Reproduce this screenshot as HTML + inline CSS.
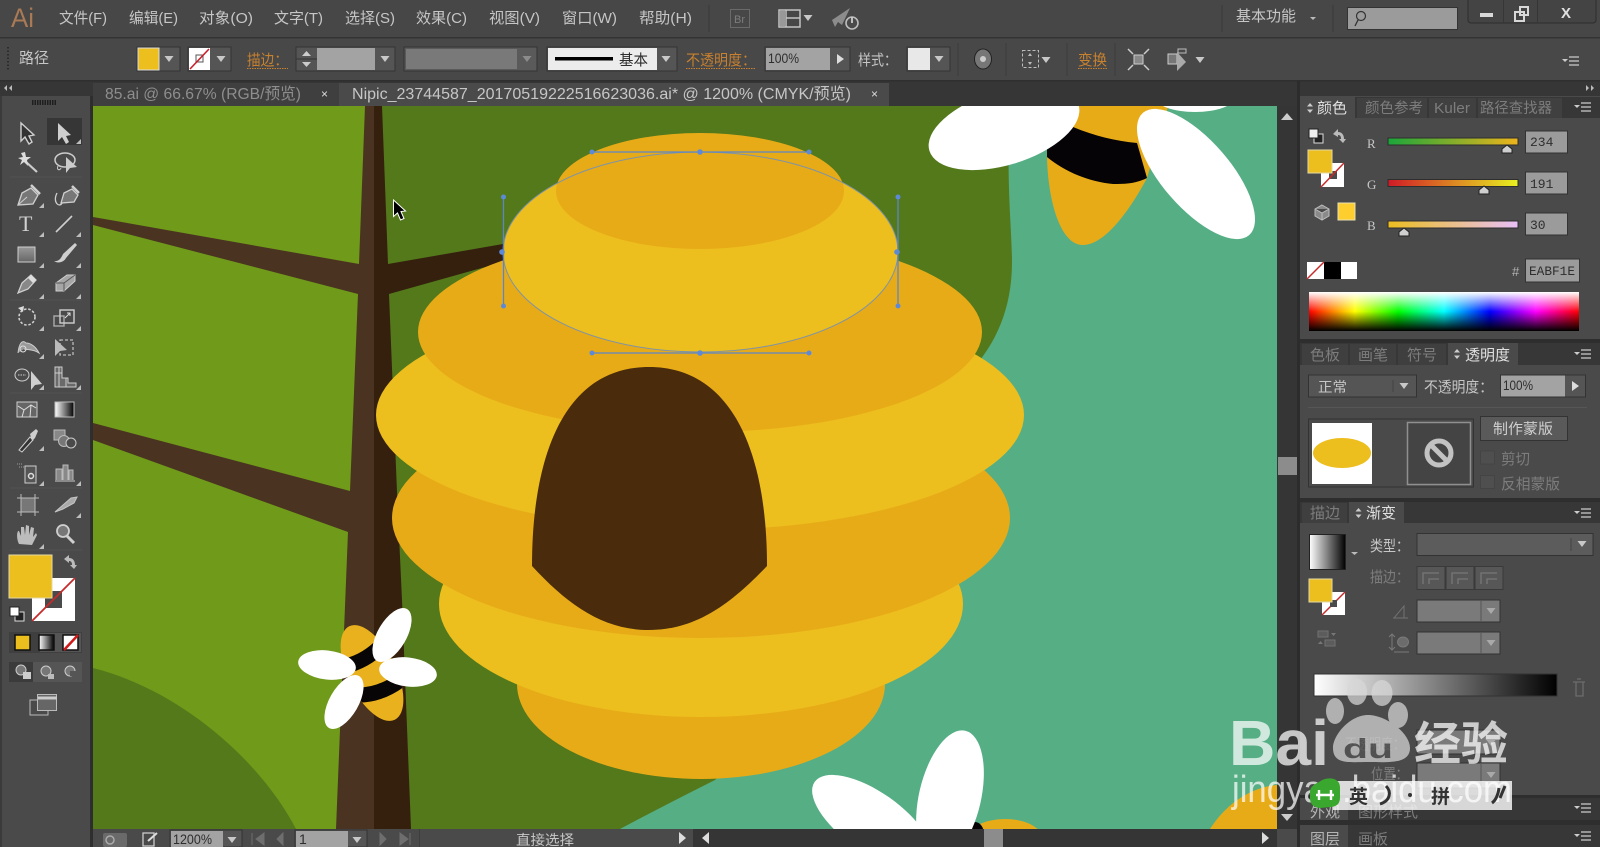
<!DOCTYPE html>
<html><head><meta charset="utf-8"><title>Illustrator</title>
<style>
html,body{margin:0;padding:0;background:#4a4a4a;overflow:hidden}
svg{display:block;font-family:"Liberation Sans","Noto Sans CJK SC",sans-serif}
text{fill:#c6c6c6;font-size:15px}
.d{fill:#7d7d7d}.o{fill:#c8812f}.m{fill:#b4b4b4}
.i{fill:#2e2e2e;font-size:14px}
.t{fill:none;stroke:#c6c6c6;stroke-width:1.5}
.f{fill:#c6c6c6}
</style></head><body>
<svg width="1600" height="847" viewBox="0 0 1600 847" xmlns="http://www.w3.org/2000/svg">
<defs>
<linearGradient id="gr" x1="0" x2="1"><stop offset="0" stop-color="#1aa63a"/><stop offset="1" stop-color="#eeb41c"/></linearGradient>
<linearGradient id="gg" x1="0" x2="1"><stop offset="0" stop-color="#d01a26"/><stop offset="1" stop-color="#e8f020"/></linearGradient>
<linearGradient id="gb" x1="0" x2="1"><stop offset="0" stop-color="#ecbe1e"/><stop offset="1" stop-color="#e8c0f8"/></linearGradient>
<linearGradient id="wb" x1="0" x2="1"><stop offset="0" stop-color="#fff"/><stop offset="1" stop-color="#000"/></linearGradient>
<linearGradient id="hue" x1="0" x2="1">
<stop offset="0" stop-color="#f00"/><stop offset=".17" stop-color="#ff0"/><stop offset=".33" stop-color="#0f0"/><stop offset=".5" stop-color="#0ff"/><stop offset=".67" stop-color="#00f"/><stop offset=".84" stop-color="#f0f"/><stop offset="1" stop-color="#f00"/></linearGradient>
<linearGradient id="shade" x1="0" x2="0" y1="0" y2="1"><stop offset="0" stop-color="#fff"/><stop offset=".5" stop-color="#fff" stop-opacity="0"/><stop offset=".5" stop-color="#000" stop-opacity="0"/><stop offset="1" stop-color="#000"/></linearGradient>
<linearGradient id="tg" x1="0" x2="0" y1="0" y2="1"><stop offset="0" stop-color="#999"/><stop offset="1" stop-color="#666"/></linearGradient>
<clipPath id="cv"><rect x="93" y="106" width="1184" height="723"/></clipPath>
<clipPath id="sb"><ellipse cx="372" cy="673" rx="52" ry="24" transform="rotate(64 372 673)"/></clipPath>
<path id="ca" d="M0 5L5 5L5 0Z" fill="#bdbdbd"/>
<path id="dn" d="M-4.500 -3L4.500 -3L0 3Z" fill="#c8c8c8"/>
<g id="mn"><path d="M-13 -2h6l-3 3z" fill="#ccc"/><path d="M-6 -4h10M-6 0h10M-6 4h10" stroke="#ccc" stroke-width="1.300" fill="none"/></g>
<g id="sw"><path d="M-3 -1.500L0 -5L3 -1.500ZM-3 1.500L0 5L3 1.500Z" fill="#ccc"/></g>
</defs>

<rect width="1600" height="847" fill="#4a4a4a"/>
<!-- top menu -->
<rect width="1600" height="37" fill="#474747"/><rect y="37" width="1600" height="1.500" fill="#333"/>
<text x="11" y="27" style="font-size:27px;fill:#a97a55" textLength="23" lengthAdjust="spacingAndGlyphs">Ai</text>
<text x="59" y="23" textLength="48" lengthAdjust="spacingAndGlyphs">文件(F)</text>
<text x="129" y="23" textLength="49" lengthAdjust="spacingAndGlyphs">编辑(E)</text>
<text x="199" y="23" textLength="54" lengthAdjust="spacingAndGlyphs">对象(O)</text>
<text x="274" y="23" textLength="49" lengthAdjust="spacingAndGlyphs">文字(T)</text>
<text x="345" y="23" textLength="50" lengthAdjust="spacingAndGlyphs">选择(S)</text>
<text x="416" y="23" textLength="51" lengthAdjust="spacingAndGlyphs">效果(C)</text>
<text x="489" y="23" textLength="51" lengthAdjust="spacingAndGlyphs">视图(V)</text>
<text x="562" y="23" textLength="55" lengthAdjust="spacingAndGlyphs">窗口(W)</text>
<text x="639" y="23" textLength="53" lengthAdjust="spacingAndGlyphs">帮助(H)</text>
<path d="M709 5V32" stroke="#3a3a3a"/>
<rect x="730.500" y="9.500" width="19" height="18" fill="none" stroke="#6a6a6a"/><text x="734" y="23" class="d" style="font-size:11px">Br</text>
<g fill="none" stroke="#c4c4c4" stroke-width="1.500"><rect x="779" y="10" width="21" height="17"/><path d="M786 10V27M786 18H800"/></g><rect x="780" y="11" width="6" height="15" fill="#999"/><use href="#dn" x="808" y="18"/>
<g fill="#8c8c8c"><path d="M832 20L850 8L842 25L838 22L835 27Z"/></g><circle cx="852" cy="23" r="6" fill="#4a4a4a" stroke="#bdbdbd" stroke-width="1.600"/><path d="M852 17V23" stroke="#ccc" stroke-width="1.800"/>
<path d="M1222 5V32M1333 5V32" stroke="#3a3a3a"/>
<text x="1236" y="21" textLength="60" lengthAdjust="spacingAndGlyphs">基本功能</text><path d="M1310 17h6l-3 3z" fill="#bbb"/>
<rect x="1347.500" y="7.500" width="110" height="22" fill="#9b9b9b" stroke="#333"/>
<circle cx="1361" cy="16" r="4.500" fill="none" stroke="#333" stroke-width="1.200"/><path d="M1358 20L1355 26" stroke="#333" stroke-width="1.300"/>
<rect x="1468" y="-4" width="128" height="27" rx="3" fill="#444" stroke="#2e2e2e"/><path d="M1503.500 0V23M1537.500 0V23" stroke="#363636"/>
<rect x="1480" y="13" width="13" height="4" fill="#d8d8d8"/>
<g fill="none" stroke="#d8d8d8" stroke-width="2"><rect x="1515" y="12" width="9" height="9"/><rect x="1520" y="7" width="8" height="8"/></g>
<text x="1561" y="18" style="font-size:15px;font-weight:bold;fill:#e0e0e0">X</text>

<!-- control bar -->
<rect y="38.500" width="1600" height="42" fill="#484848"/><rect y="80" width="1600" height="1.500" fill="#2f2f2f"/>
<path d="M8 47V71" stroke="#222" stroke-width="1.500" stroke-dasharray="1.500 2"/>
<text x="19" y="63" textLength="30" lengthAdjust="spacingAndGlyphs">路径</text>
<rect x="137" y="47" width="43" height="24" fill="#555" stroke="#333"/><rect x="138" y="48" width="21" height="22" fill="#ecbe1e" stroke="#ddd"/><use href="#dn" x="169" y="59"/>
<rect x="188" y="47" width="43" height="24" fill="#555" stroke="#333"/><rect x="189" y="48" width="21" height="22" fill="#fff"/><rect x="196" y="55" width="7" height="7" fill="none" stroke="#555"/><path d="M190 69L209 49" stroke="#c8202a" stroke-width="1.600"/><use href="#dn" x="221" y="59"/>
<text x="247" y="65" class="o" textLength="41" lengthAdjust="spacingAndGlyphs">描边：</text><path d="M247 68.500H288" stroke="#c8812f" stroke-dasharray="1.500 1"/>
<rect x="296" y="47" width="99" height="24" fill="#555" stroke="#333"/><rect x="317" y="48" width="58" height="22" fill="#a3a3a3"/><path d="M296 59H317" stroke="#333"/><path d="M302 56l4.500-5 4.500 5zM302 62l4.500 5 4.500-5z" fill="#ccc"/><use href="#dn" x="385" y="59"/>
<rect x="404" y="47" width="133" height="24" fill="#5a5a5a" stroke="#333"/><rect x="406" y="49" width="111" height="20" fill="#797979"/><use href="#dn" x="527" y="59" opacity=".45"/>
<rect x="547" y="47" width="130" height="24" fill="#555" stroke="#333"/><rect x="548" y="48" width="109" height="22" fill="#ececec"/><rect x="555" y="57" width="58" height="3.500" fill="#000"/><text x="619" y="65" class="i" style="font-size:15px" textLength="29" lengthAdjust="spacingAndGlyphs">基本</text><use href="#dn" x="666" y="59"/>
<text x="686" y="65" class="o" textLength="70" lengthAdjust="spacingAndGlyphs">不透明度：</text><path d="M686 68.500H756" stroke="#c8812f" stroke-dasharray="1.500 1"/>
<rect x="765" y="47" width="85" height="24" fill="#555" stroke="#333"/><rect x="766" y="48" width="64" height="22" fill="#a3a3a3"/><text x="768" y="63" class="i" textLength="31" lengthAdjust="spacingAndGlyphs">100%</text><path d="M837 54l7 5-7 5z" fill="#ddd"/>
<text x="858" y="65" textLength="39" lengthAdjust="spacingAndGlyphs">样式：</text>
<rect x="907" y="47" width="43" height="24" fill="#555" stroke="#333"/><rect x="908" y="48" width="22" height="22" fill="#e8e8e8"/><use href="#dn" x="939" y="59"/>
<path d="M958 43V76M1006 43V76M1067 43V76M1115 43V76" stroke="#3d3d3d"/>
<ellipse cx="983" cy="59" rx="8.500" ry="10" fill="#777" stroke="#222"/><circle cx="983" cy="59" r="3" fill="#ccc"/>
<rect x="1022.500" y="50.500" width="16" height="17" fill="none" stroke="#bdbdbd" stroke-dasharray="3 2"/><path d="M1030 53l2 3h-4zM1030 65l2-3h-4z" fill="#bbb"/><use href="#dn" x="1046" y="60"/>
<text x="1078" y="65" class="o" textLength="29" lengthAdjust="spacingAndGlyphs">变换</text><path d="M1078 68.500H1107" stroke="#c8812f" stroke-dasharray="1.500 1"/>
<rect x="1134" y="55" width="9" height="9" fill="#888" stroke="#ccc"/><path d="M1128 49l5 5M1149 49l-5 5M1128 70l5-5M1149 70l-5-5" stroke="#ccc" stroke-width="1.500"/>
<rect x="1168" y="54" width="9" height="10" fill="#777" stroke="#ccc"/><rect x="1178" y="49" width="8" height="4" fill="none" stroke="#bbb"/><path d="M1177 52V71L1186 62Z" fill="#aaa"/><use href="#dn" x="1200" y="60"/>
<use href="#mn" x="1575" y="61"/>

<!-- tab row -->
<rect y="81.500" width="1600" height="25" fill="#363636"/>
<path d="M6 85l-3 3 3 3zM11 85l-3 3 3 3z" fill="#bbb"/>
<rect x="93" y="83" width="246" height="23" fill="#3f3f3f"/>
<rect x="339" y="83" width="550" height="23" fill="#4a4a4a"/>
<text x="105" y="99" style="fill:#8e8e8e;font-size:16px" textLength="196" lengthAdjust="spacingAndGlyphs">85.ai @ 66.67% (RGB/预览)</text>
<text x="321" y="98" style="font-size:12px;fill:#ddd">×</text>
<text x="352" y="99" style="font-size:16px" textLength="499" lengthAdjust="spacingAndGlyphs">Nipic_23744587_20170519222516623036.ai* @ 1200% (CMYK/预览)</text>
<text x="871" y="98" style="font-size:12px;fill:#ddd">×</text>

<!-- canvas -->
<rect x="90" y="96" width="3" height="751" fill="#2e2e2e"/>
<g clip-path="url(#cv)">
<rect x="93" y="106" width="1184" height="723" fill="#56ae85"/>
<path d="M93 106H1011C1005 170 1012 230 1012 262C1012 310 995 345 970 372C900 560 800 700 715 780Q665 805 620 829H93Z" fill="#53791b"/>
<path d="M93 106H374V829H93Z" fill="#6f9a1a"/>
<path d="M93 668C180 690 260 760 296 829H93Z" fill="#53791b"/>
<!-- tree -->
<path d="M93 217L359 264L365 106H374V829H336L348 532L93 440V423L350 491L358 294L93 225Z" fill="#4a3320"/>
<path d="M374 106H382L388 264L503 244V262L389 294L397 492L402 600L411 829H374Z" fill="#35200e"/>
<!-- hive -->
<ellipse cx="701" cy="684" rx="184" ry="95" fill="#e8ab18"/>
<ellipse cx="701" cy="604" rx="262" ry="113" fill="#ecbe1e"/>
<ellipse cx="701" cy="518" rx="309" ry="120" fill="#e8ab18"/>
<ellipse cx="700" cy="415" rx="324" ry="115" fill="#ecbe1e"/>
<ellipse cx="700" cy="332" rx="282" ry="100" fill="#e8ab18"/>
<ellipse cx="700.500" cy="252" rx="197.500" ry="100" fill="#ecbe1e"/>
<ellipse cx="700" cy="191" rx="144" ry="58" fill="#e8ab18"/>
<path d="M532 566C532 458 563 367 649 367C735 367 767 458 767 566C730 605 695 630 649 630C603 630 568 605 532 566Z" fill="#4a2c0c"/>
<!-- selection -->
<ellipse cx="700.500" cy="252" rx="197.500" ry="100" fill="none" stroke="#7d93a8" stroke-width="1"/>
<g stroke="#5c86c8" stroke-width="1.300" fill="none"><path d="M503.500 197V306M898 197V306M592 152H809M592 353H809"/></g>
<g fill="#5c8ad8"><circle cx="503.500" cy="197" r="2.500"/><circle cx="503.500" cy="306" r="2.500"/><circle cx="502" cy="252" r="2.800"/><circle cx="898" cy="197" r="2.500"/><circle cx="898" cy="306" r="2.500"/><circle cx="897" cy="252" r="2.800"/><circle cx="592" cy="152" r="2.500"/><circle cx="809" cy="152" r="2.500"/><circle cx="700" cy="152" r="2.800"/><circle cx="592" cy="353" r="2.500"/><circle cx="809" cy="353" r="2.500"/><circle cx="700" cy="353" r="2.800"/></g>
<!-- cursor -->
<path d="M393.500 200V216.500L397.500 213L400.500 220L404 218.500L401 211.500L405.500 211Z" fill="#000" stroke="#fff" stroke-width="1"/>
<!-- top bee -->
<path d="M1047 157C1048 200 1060 245 1083 245C1105 245 1130 210 1147 178L1170 100H1078L1073 127Z" fill="#e8ab18"/>
<path d="M1073 127C1095 136 1115 141 1137 143L1147 178C1135 184 1125 184 1113 184C1090 182 1065 172 1047 157V148Z" fill="#050305"/>
<ellipse cx="1004" cy="128" rx="78" ry="37" transform="rotate(-17 1004 128)" fill="#fff"/>
<ellipse cx="1196" cy="174" rx="81" ry="34" transform="rotate(49 1196 174)" fill="#fff"/>
<ellipse cx="1195" cy="97" rx="40" ry="15" fill="#fff"/>
<!-- small bee -->
<ellipse cx="372" cy="673" rx="52" ry="24" transform="rotate(64 372 673)" fill="#e9b11e"/>
<g clip-path="url(#sb)"><path d="M340 667Q362 664 380 647" stroke="#080506" stroke-width="15" fill="none"/><path d="M356 695Q380 696 402 679" stroke="#080506" stroke-width="15" fill="none"/></g>
<g fill="#fff">
<ellipse cx="327" cy="665" rx="29" ry="14.500" transform="rotate(7 327 665)"/>
<ellipse cx="408" cy="672" rx="29" ry="14.500" transform="rotate(7 408 672)"/>
<ellipse cx="392" cy="635" rx="30" ry="14.500" transform="rotate(-60 392 635)"/>
<ellipse cx="344" cy="702" rx="30" ry="14.500" transform="rotate(-60 344 702)"/>
</g>
<!-- bottom flower -->
<ellipse cx="1005" cy="838" rx="37" ry="19" fill="#e8ab18"/>
<ellipse cx="975" cy="834" rx="9" ry="12" fill="#050305"/>
<ellipse cx="872" cy="822" rx="70" ry="30" transform="rotate(35 872 822)" fill="#fff"/>
<ellipse cx="950" cy="797" rx="31" ry="68" transform="rotate(13 950 797)" fill="#fff"/>
<path d="M1210 829C1225 805 1250 787 1277 785V829Z" fill="#e8ab18"/>
</g>

<!-- vertical scrollbar -->
<rect x="1277" y="106" width="20" height="723" fill="#353535"/><rect x="1297" y="81" width="3" height="766" fill="#2c2c2c"/>
<path d="M1281 120L1287 113L1293 120Z" fill="#ccc"/><path d="M1281 814L1287 821L1293 814Z" fill="#ccc"/>
<rect x="1278" y="457" width="19" height="18" fill="#8c8c8c"/>

<!-- status bar -->
<rect x="93" y="829" width="600" height="18" fill="#4a4a4a"/>
<rect x="693" y="829" width="584" height="18" fill="#353535"/><rect x="1277" y="829" width="20" height="18" fill="#4a4a4a"/>
<rect x="103" y="833" width="24" height="14" rx="2" fill="#6a6a6a"/><circle cx="110" cy="840" r="4" fill="none" stroke="#aaa" stroke-width="1.500"/>
<rect x="143" y="833" width="11" height="13" fill="none" stroke="#ccc" stroke-width="1.300"/><path d="M148 841L157 833" stroke="#ddd" stroke-width="2"/>
<rect x="170" y="830" width="72" height="17" fill="#555" stroke="#333"/><rect x="171" y="831" width="52" height="16" fill="#a3a3a3"/><text x="173" y="844" class="i" textLength="39" lengthAdjust="spacingAndGlyphs">1200%</text><use href="#dn" x="232" y="840"/>
<path d="M252 833V845M264 833l-8 6 8 6zM283 833l-6 6 6 6z" fill="#6e6e6e" stroke="#6e6e6e"/>
<rect x="295" y="830" width="72" height="17" fill="#555" stroke="#333"/><rect x="296" y="831" width="52" height="16" fill="#a3a3a3"/><text x="299" y="844" class="i">1</text><use href="#dn" x="357" y="840"/>
<path d="M380 833l6 6-6 6zM400 833l8 6-8 6zM410 833V845" fill="#6e6e6e" stroke="#6e6e6e"/>
<path d="M419.500 829V847" stroke="#3d3d3d"/>
<text x="516" y="845" style="font-size:14px" textLength="58" lengthAdjust="spacingAndGlyphs">直接选择</text>
<path d="M679 832l7 6-7 6z" fill="#ddd"/><path d="M709 832l-7 6 7 6z" fill="#ddd"/>
<rect x="984" y="829" width="19" height="18" fill="#8c8c8c"/><path d="M1262 832l7 6-7 6z" fill="#ddd"/>

<!-- left toolbar -->
<rect x="0" y="81.500" width="90" height="15" fill="#363636"/>
<path d="M7 85l-3 3 3 3zM12 85l-3 3 3 3z" fill="#bbb"/>
<rect x="2" y="96" width="88" height="751" fill="#4a4a4a"/><rect x="0" y="96" width="2" height="751" fill="#3a3a3a"/>
<path d="M32 102.500H56" stroke="#1f1f1f" stroke-width="5" stroke-dasharray="1.500 1"/>
<rect x="47" y="118" width="35" height="27" fill="#363636"/>
<path d="M10 177H82M10 300H82M10 393H82M10 488H82M10 550H82" stroke="#565656" opacity=".8"/>
<!-- tools -->
<g transform="translate(27 133)"><path d="M-6 -10V8L-2 4L2 11L5 9L2 3L7 2Z" fill="#333" stroke="#cfcfcf" stroke-width="1.400"/></g>
<g transform="translate(64 133)"><path d="M-6 -10V8L-2 4L2 11L5 9L2 3L7 2Z" fill="#cfcfcf"/></g><use href="#ca" x="76" y="139"/>
<g transform="translate(27 163)"><path d="M-2 -2L10 9" stroke="#ccc" stroke-width="2.200"/><path d="M-6 -10L-4 -6L-9 -5L-5 -3L-7 2L-3 -1L1 3L0 -3L4 -6L-1 -6L-2 -11Z" fill="#ddd"/></g>
<ellipse cx="65" cy="160" rx="10" ry="7" fill="none" stroke="#ccc" stroke-width="1.500"/><path d="M58 166C56 170 60 171 61 168" stroke="#ccc" fill="none"/><path d="M66 157V173L70 168L77 167Z" fill="#ccc"/>
<path d="M18 205L22 193L31 188L38 195L33 204Z" fill="#777" stroke="#cfcfcf" stroke-width="1.300"/><path d="M18 205L27 197" stroke="#cfcfcf"/><path d="M31 185L40 194" stroke="#cfcfcf" stroke-width="2.500"/><use href="#ca" x="39" y="203"/>
<path d="M61 203L64 193L72 189L78 195L74 202Z" fill="#777" stroke="#cfcfcf" stroke-width="1.300"/><path d="M72 186L79 193" stroke="#cfcfcf" stroke-width="2.500"/><path d="M57 193C52 203 60 208 62 203" fill="none" stroke="#cfcfcf" stroke-width="1.300"/>
<text x="19" y="231" style="font-family:'Liberation Serif',serif;font-size:22px;fill:#d0d0d0">T</text><use href="#ca" x="39" y="232"/>
<path d="M56 232L72 216" stroke="#cfcfcf" stroke-width="1.600"/><use href="#ca" x="76" y="232"/>
<rect x="18" y="247" width="17" height="15" fill="url(#tg)" stroke="#cfcfcf"/><use href="#ca" x="39" y="263"/>
<path d="M54 261C60 262 62 256 63 254L75 243L77 245L66 258C64 262 58 264 54 261Z" fill="#cfcfcf"/><use href="#ca" x="76" y="263"/>
<path d="M18 293L22 283L31 275L36 280L28 289Z" fill="#888" stroke="#cfcfcf" stroke-width="1.300"/><path d="M31 275L36 280L33 283L28 278Z" fill="#ddd"/><use href="#ca" x="39" y="294"/>
<path d="M56 291V283L67 275H75V281L64 291Z" fill="#a6a6a6" stroke="#cfcfcf"/><path d="M56 283H64V291M64 283L75 275" stroke="#555" fill="none"/><use href="#ca" x="76" y="294"/>
<circle cx="27" cy="317" r="8" fill="none" stroke="#cfcfcf" stroke-width="1.600" stroke-dasharray="2.500 1.800"/><path d="M18 308L24 306L23 312Z" fill="#ddd"/><use href="#ca" x="39" y="326"/>
<rect x="54" y="316" width="10" height="10" fill="none" stroke="#aaa" stroke-width="1.400"/><rect x="60" y="310" width="14" height="13" fill="none" stroke="#cfcfcf" stroke-width="1.400"/><path d="M65 318l5-5M67 313h3v3" stroke="#ddd" fill="none"/><use href="#ca" x="76" y="326"/>
<path d="M18 353C19 344 22 339 26 343C31 343 36 347 39 353C33 349 28 350 24 349" fill="#999" stroke="#cfcfcf"/><circle cx="23" cy="349" r="3" fill="none" stroke="#ddd"/><use href="#ca" x="39" y="354"/>
<path d="M55 339V356L60 351L67 350Z" fill="#bbb"/><rect x="60" y="340" width="13" height="15" fill="none" stroke="#bbb" stroke-dasharray="3 2" stroke-width="1.300"/>
<ellipse cx="22" cy="375" rx="7" ry="6" fill="none" stroke="#cfcfcf"/><path d="M31 371V390L35 385L42 384Z" fill="#cfcfcf"/><path d="M18 375h8" stroke="#ccc" stroke-dasharray="1.500 1"/><use href="#ca" x="39" y="385"/>
<path d="M55 367V387H76V383H68V378H62V367Z" fill="#6a6a6a" stroke="#ccc"/><path d="M59 367V387M62 373H55M66 378V387" stroke="#ccc"/><use href="#ca" x="76" y="385"/>
<rect x="17" y="402" width="20" height="15" fill="#666" stroke="#cfcfcf"/><path d="M18 406L24 410L22 417M24 410L31 405L36 408M31 405L30 417" fill="none" stroke="#ddd"/>
<rect x="55" y="402" width="19" height="15" fill="url(#wb)" stroke="#bbb"/>
<path d="M19 450L30 437L33 440L22 452Z" fill="#333" stroke="#cfcfcf"/><path d="M30 434L36 429L38 431L35 438L32 441Z" fill="#cfcfcf"/><use href="#ca" x="39" y="446"/>
<rect x="54" y="430" width="11" height="10" fill="#888" stroke="#bbb"/><circle cx="64" cy="441" r="5.500" fill="#777" stroke="#bbb"/><circle cx="71" cy="443" r="5" fill="#4a4a4a" stroke="#ccc"/>
<rect x="25" y="466" width="11" height="17" fill="#555" stroke="#cfcfcf"/><circle cx="31" cy="476" r="2.500" fill="none" stroke="#ddd" stroke-width="1.500"/><path d="M17 464h5M19 467h5" stroke="#999" stroke-dasharray="1 1"/><use href="#ca" x="39" y="481"/>
<path d="M56 480V469H62V480M63 480V465H68V480M69 480V470H73V480" fill="#888" stroke="#bbb"/><path d="M55 481H75" stroke="#ccc"/><use href="#ca" x="76" y="481"/>
<rect x="21" y="498" width="14" height="14" fill="#777" stroke="#bbb"/><path d="M17 498H39M17 512H39M21 494V516M35 494V516" stroke="#bbb" stroke-width="1"/>
<path d="M55 512L71 498L77 497L74 503L63 509Z" fill="#aaa" stroke="#c4c4c4"/><use href="#ca" x="76" y="513"/>
<path d="M19 544C16 538 17 530 19 531L21 536L21 527L24 527L25 535L26 525L29 526L29 535L31 527L34 528L33 537L36 533L37 535L32 545Z" fill="#bcbcbc"/><use href="#ca" x="39" y="544"/>
<circle cx="63" cy="531" r="6" fill="#777" stroke="#cfcfcf" stroke-width="1.800"/><path d="M67 536L74 543" stroke="#cfcfcf" stroke-width="3"/>
<!-- fill/stroke -->
<rect x="32" y="578" width="43" height="43" fill="#fff"/><rect x="45" y="591" width="17" height="17" fill="#4a4a4a"/>
<path d="M32 621L75 578" stroke="#c62a2a" stroke-width="1.800"/>
<rect x="9" y="555" width="43" height="43" fill="#ecbe1e" stroke="#e4d9a6"/>
<path d="M64 559L69 555V558C73 558 75 561 75 565H77L74 569L70 565H72C72 562 71 561 69 561V563Z" fill="#bbb"/>
<rect x="15" y="612" width="9" height="9" fill="#222" stroke="#ddd"/><rect x="10" y="607" width="9" height="9" fill="#fff" stroke="#222"/>
<rect x="9" y="632" width="73" height="21" fill="#3f3f3f"/><rect x="40" y="633" width="41" height="19" fill="#555"/>
<rect x="15" y="635" width="15" height="15" fill="#ecbe1e" stroke="#111" stroke-width="1.500"/>
<rect x="39" y="635" width="15" height="15" fill="url(#wb)" stroke="#111" stroke-width="1.500"/>
<rect x="63" y="635" width="15" height="15" fill="#fff" stroke="#111" stroke-width="1.500"/><path d="M64 650L78 635" stroke="#d01818" stroke-width="2.500"/>
<rect x="9" y="662" width="73" height="20" fill="#555"/><rect x="9" y="662" width="24" height="20" fill="#3b3b3b"/>
<circle cx="21" cy="670" r="5" fill="#777" stroke="#ccc"/><rect x="23" y="672" width="8" height="7" fill="#ccc"/>
<circle cx="46" cy="671" r="5" fill="#777" stroke="#ccc"/><path d="M48 674h6v5h-6z" fill="#bbb"/>
<circle cx="70" cy="671" r="5" fill="#777" stroke="#ccc"/><path d="M70 671h6v5h-6z" fill="#555"/>
<rect x="30" y="700" width="18" height="15" fill="none" stroke="#bbb"/><rect x="37.500" y="694.500" width="19" height="16" fill="#666" stroke="#bbb"/><path d="M38 698H57" stroke="#ccc" stroke-width="3"/>

<!-- right panels -->
<rect x="1300" y="81.500" width="300" height="15" fill="#363636"/>
<path d="M1586 85l3 3-3 3zM1591 85l3 3-3 3z" fill="#bbb"/>
<rect x="1300" y="96" width="300" height="751" fill="#4a4a4a"/>
<!-- color tabs -->
<rect x="1300" y="97" width="300" height="21" fill="#373737"/>
<rect x="1300" y="97" width="55" height="21" fill="#4a4a4a"/>
<rect x="1357" y="98" width="70" height="20" fill="#404040"/><rect x="1429" y="98" width="47" height="20" fill="#404040"/><rect x="1478" y="98" width="84" height="20" fill="#404040"/>
<use href="#sw" x="1310" y="108"/>
<text x="1317" y="113" style="font-size:15px;fill:#e0e0e0" textLength="30" lengthAdjust="spacingAndGlyphs">颜色</text>
<text x="1365" y="113" class="d" style="font-size:14.500px" textLength="58" lengthAdjust="spacingAndGlyphs">颜色参考</text>
<text x="1434" y="113" class="d" style="font-size:15px" textLength="36" lengthAdjust="spacingAndGlyphs">Kuler</text>
<text x="1480" y="113" class="d" style="font-size:14.500px" textLength="72" lengthAdjust="spacingAndGlyphs">路径查找器</text>
<use href="#mn" x="1587" y="107"/>
<rect x="1314" y="134" width="9" height="9" fill="#222" stroke="#ddd"/><rect x="1309" y="129" width="9" height="9" fill="#eee" stroke="#222"/>
<path d="M1333 134L1338 129V132C1342 132 1344 135 1344 139H1346L1343 143L1339 139H1341C1341 136 1340 135 1338 135V137Z" fill="#bbb"/>
<rect x="1321" y="163" width="23" height="24" fill="#fff"/><rect x="1329" y="171" width="8" height="8" fill="#4a4a4a"/><path d="M1321 187L1344 163" stroke="#c62a2a" stroke-width="1.500"/>
<rect x="1308" y="150" width="24" height="23" fill="#ecbe1e" stroke="#e4d9a6"/>
<path d="M1322 205L1329 209V216L1322 220L1315 216V209ZM1315 209L1322 213L1329 209M1322 213V220" fill="#8a8a8a" stroke="#bdbdbd"/>
<rect x="1338" y="203" width="17" height="17" fill="#fece2f" stroke="#e8e0b0"/>
<text x="1367" y="148" style="font-family:'Liberation Serif',serif;font-size:13px">R</text>
<text x="1367" y="189" style="font-family:'Liberation Serif',serif;font-size:13px">G</text>
<text x="1367" y="230" style="font-family:'Liberation Serif',serif;font-size:13px">B</text>
<rect x="1388" y="138" width="130" height="7" fill="url(#gr)" stroke="#2e2e2e"/>
<rect x="1388" y="179.500" width="130" height="7" fill="url(#gg)" stroke="#2e2e2e"/>
<rect x="1388" y="221" width="130" height="7" fill="url(#gb)" stroke="#2e2e2e"/>
<g fill="#cfcfcf" stroke="#222"><path d="M1502 153V149L1507 145L1512 149V153Z"/><path d="M1479 194V190L1484 186L1489 190V194Z"/><path d="M1399 236V232L1404 228L1409 232V236Z"/></g>
<g fill="#9b9b9b" stroke="#333"><rect x="1525.500" y="131" width="42" height="22"/><rect x="1525.500" y="172" width="42" height="22"/><rect x="1525.500" y="213" width="42" height="22"/><rect x="1525.500" y="259" width="54" height="23"/></g>
<g style="font-family:'Liberation Mono',monospace"><text x="1530" y="146" class="i" style="font-size:13px">234</text><text x="1530" y="188" class="i" style="font-size:13px">191</text><text x="1530" y="229" class="i" style="font-size:13px">30</text><text x="1529" y="275" class="i" style="font-size:13px" textLength="46" lengthAdjust="spacingAndGlyphs">EABF1E</text></g>
<rect x="1307" y="262" width="50" height="17" fill="#fff"/><rect x="1324" y="262" width="17" height="17" fill="#000"/><path d="M1307 279L1324 262" stroke="#c62a2a" stroke-width="1.500"/>
<text x="1512" y="276" class="m" style="font-size:13px">#</text>
<rect x="1309" y="292" width="270" height="39" fill="url(#hue)"/><rect x="1309" y="292" width="270" height="39" fill="url(#shade)"/>
<rect x="1300" y="339" width="300" height="4" fill="#2e2e2e"/>
<!-- transparency -->
<rect x="1300" y="343" width="300" height="22" fill="#373737"/>
<rect x="1448" y="343" width="70" height="22" fill="#4a4a4a"/>
<rect x="1302" y="344" width="46" height="21" fill="#3f3f3f"/><rect x="1350" y="344" width="46" height="21" fill="#3f3f3f"/><rect x="1398" y="344" width="48" height="21" fill="#3f3f3f"/>
<text x="1310" y="360" class="d" style="font-size:15px" textLength="30" lengthAdjust="spacingAndGlyphs">色板</text>
<text x="1358" y="360" class="d" style="font-size:15px" textLength="30" lengthAdjust="spacingAndGlyphs">画笔</text>
<text x="1407" y="360" class="d" style="font-size:15px" textLength="30" lengthAdjust="spacingAndGlyphs">符号</text>
<use href="#sw" x="1457" y="354"/>
<text x="1465" y="360" style="font-size:15px;fill:#e0e0e0" textLength="45" lengthAdjust="spacingAndGlyphs">透明度</text>
<use href="#mn" x="1587" y="354"/>
<rect x="1308.500" y="375" width="108" height="22" fill="#555" stroke="#333"/><path d="M1393 380V392" stroke="#444"/><use href="#dn" x="1404" y="386"/>
<text x="1318" y="392" style="font-size:14px" textLength="29" lengthAdjust="spacingAndGlyphs">正常</text>
<text x="1424" y="392" textLength="69" lengthAdjust="spacingAndGlyphs">不透明度：</text>
<rect x="1500.500" y="375" width="85" height="22" fill="#555" stroke="#333"/><rect x="1501" y="375.500" width="64" height="21" fill="#a3a3a3"/><text x="1503" y="390" class="i" textLength="30" lengthAdjust="spacingAndGlyphs">100%</text><path d="M1572 381l7 5-7 5z" fill="#ddd"/>
<path d="M1308 407.500H1587" stroke="#565656"/>
<rect x="1308.500" y="419" width="165" height="68" fill="#4a4a4a" stroke="#333"/>
<rect x="1312" y="423" width="60" height="61" fill="#fff"/><ellipse cx="1342" cy="453" rx="29" ry="15" fill="#ecbe1e"/>
<rect x="1407.500" y="422.500" width="63" height="62" fill="#444" stroke="#8f8f8f" stroke-width="1.500"/>
<circle cx="1439" cy="453" r="12" fill="none" stroke="#c2c2c2" stroke-width="5"/><path d="M1431 445L1447 461" stroke="#c2c2c2" stroke-width="5"/>
<rect x="1480.500" y="416.500" width="87" height="24" fill="#5a5a5a" stroke="#333"/><text x="1493" y="434" style="font-size:14.500px;fill:#d0d0d0" textLength="60" lengthAdjust="spacingAndGlyphs">制作蒙版</text>
<rect x="1480.500" y="451" width="14" height="13" fill="#4f4f4f" stroke="#444"/><rect x="1480.500" y="475.500" width="14" height="13" fill="#4f4f4f" stroke="#444"/>
<text x="1501" y="464" class="d" textLength="29" lengthAdjust="spacingAndGlyphs">剪切</text><text x="1501" y="489" class="d" textLength="59" lengthAdjust="spacingAndGlyphs">反相蒙版</text>
<rect x="1300" y="498" width="300" height="4" fill="#2e2e2e"/>
<!-- gradient -->
<rect x="1300" y="502" width="300" height="21" fill="#373737"/>
<rect x="1349" y="502" width="55" height="21" fill="#4a4a4a"/>
<rect x="1302" y="503" width="45" height="20" fill="#3f3f3f"/>
<text x="1310" y="518" class="d" style="font-size:15px" textLength="30" lengthAdjust="spacingAndGlyphs">描边</text>
<use href="#sw" x="1358.500" y="513"/>
<text x="1366" y="518" style="font-size:15px;fill:#e0e0e0" textLength="30" lengthAdjust="spacingAndGlyphs">渐变</text>
<use href="#mn" x="1587" y="513"/>
<rect x="1309.500" y="534.500" width="36" height="35" fill="url(#wb)" stroke="#222"/><path d="M1351 552h7l-3.500 3z" fill="#bbb"/>
<text x="1370" y="551" textLength="39" lengthAdjust="spacingAndGlyphs">类型：</text>
<rect x="1417" y="533.500" width="176" height="22" fill="#5c5c5c" stroke="#333"/><path d="M1571 538V551" stroke="#444"/><use href="#dn" x="1582" y="544"/>
<text x="1370" y="582" class="d" textLength="39" lengthAdjust="spacingAndGlyphs">描边：</text>
<g fill="#575757" stroke="#3a3a3a"><rect x="1417" y="566.500" width="28" height="23"/><rect x="1446" y="566.500" width="28" height="23"/><rect x="1475" y="566.500" width="28" height="23"/></g>
<path d="M1423 584V573H1439M1429 584V579H1439M1452 584V573H1468M1458 584V579H1468M1481 584V573H1497M1487 584V579H1497" fill="none" stroke="#777" stroke-width="1.300"/>
<rect x="1322" y="592" width="23" height="23" fill="#fff"/><path d="M1322 615L1345 592" stroke="#c62a2a" stroke-width="1.500"/><rect x="1330" y="600" width="7" height="7" fill="#4a4a4a"/>
<rect x="1309" y="579" width="23" height="23" fill="#ecbe1e" stroke="#e4d9a6"/>
<path d="M1394 618L1404 606V618H1408" fill="none" stroke="#717171"/><path d="M1393 618H1408" stroke="#717171"/>
<rect x="1417" y="600" width="83" height="22" fill="#7a7a7a" stroke="#333"/><path d="M1481 600V622" stroke="#555"/><use href="#dn" x="1491" y="611" opacity=".6"/>
<rect x="1417" y="632" width="83" height="22" fill="#7a7a7a" stroke="#333"/><path d="M1481 632V654" stroke="#555"/><use href="#dn" x="1491" y="643" opacity=".6"/>
<path d="M1392 634V650M1389 637l3-3 3 3M1389 647l3 3 3-3M1394 652H1409" fill="none" stroke="#7a7a7a"/><ellipse cx="1403" cy="642" rx="5.500" ry="5" fill="#6c6c6c" stroke="#7a7a7a"/>
<rect x="1318" y="631" width="10" height="6" fill="#5c5c5c" stroke="#717171"/><rect x="1325" y="640" width="10" height="6" fill="#5c5c5c" stroke="#717171"/><path d="M1331 633h5l-2.500 3zM1318 644h5l-2.500-3z" fill="#777"/>
<rect x="1314" y="674" width="243" height="22" fill="url(#wb)" stroke="#333"/>
<path d="M1573 682H1585M1576 682V696H1583V682M1577 679H1581" fill="none" stroke="#6c6c6c" stroke-width="1.300"/>
<text x="1345" y="749" class="d" textLength="60" lengthAdjust="spacingAndGlyphs" opacity=".8">不透明度：</text>
<rect x="1417" y="730" width="83" height="24" fill="#7a7a7a" stroke="#333"/><use href="#dn" x="1491" y="743" opacity=".6"/>
<text x="1371" y="779" class="d" textLength="37" lengthAdjust="spacingAndGlyphs">位置：</text>
<rect x="1417" y="763" width="83" height="25" fill="#7a7a7a" stroke="#333"/><path d="M1481 763V788" stroke="#555"/><use href="#dn" x="1491" y="775" opacity=".6"/>
<rect x="1300" y="795" width="300" height="3" fill="#2e2e2e"/>
<rect x="1300" y="798" width="300" height="22" fill="#373737"/><rect x="1300" y="798" width="48" height="22" fill="#4a4a4a"/>
<text x="1310" y="817" class="m" style="font-size:15px" textLength="30" lengthAdjust="spacingAndGlyphs">外观</text>
<text x="1358" y="817" class="d" style="font-size:15px" textLength="60" lengthAdjust="spacingAndGlyphs">图形样式</text>
<use href="#mn" x="1587" y="808"/>
<rect x="1300" y="820" width="300" height="5" fill="#2e2e2e"/>
<rect x="1300" y="825" width="300" height="22" fill="#373737"/><rect x="1300" y="825" width="48" height="22" fill="#4a4a4a"/>
<text x="1310" y="844" class="m" style="font-size:15px" textLength="30" lengthAdjust="spacingAndGlyphs">图层</text>
<text x="1358" y="844" class="d" style="font-size:15px" textLength="30" lengthAdjust="spacingAndGlyphs">画板</text>
<use href="#mn" x="1587" y="836"/>

<!-- watermark -->
<g opacity=".72">
<text x="1229" y="765" style="font-size:64px;font-weight:bold;fill:#fff" textLength="100" lengthAdjust="spacingAndGlyphs">Bai</text>
<g fill="#d8d8d8"><ellipse cx="1357" cy="692" rx="10" ry="13"/><ellipse cx="1382" cy="693" rx="10.500" ry="13"/><ellipse cx="1335" cy="711" rx="9" ry="13"/><ellipse cx="1398" cy="715" rx="10" ry="13"/><path d="M1368 715C1350 715 1333 735 1333 748C1333 765 1350 762 1368 762C1386 762 1410 765 1410 748C1410 733 1386 715 1368 715Z"/></g>
<text x="1343" y="758" style="font-size:28px;font-weight:bold;fill:#555" textLength="50" lengthAdjust="spacingAndGlyphs">du</text>
<text x="1414" y="760" style="font-size:46px;font-weight:bold;fill:#fff" textLength="94" lengthAdjust="spacingAndGlyphs">经验</text>
</g>
<text x="1232" y="802" style="font-size:38px;fill:#fff;opacity:.72" textLength="280" lengthAdjust="spacingAndGlyphs">jingyan.baidu.com</text>
<rect x="1333" y="781" width="179" height="29" fill="#fff" opacity=".8"/>
<path d="M1319 782Q1326 777 1334 779Q1340 781 1340 788V798Q1340 806 1331 807L1320 808Q1310 807 1310 798V792Q1310 786 1319 782Z" fill="#3aa82e"/>
<path d="M1319 790V800M1331 790V800M1316 795H1334" stroke="#fff" stroke-width="2.400" fill="none"/>
<text x="1349" y="803" style="font-size:19px;font-weight:bold;fill:#333">英</text>
<path d="M1386 786C1392 792 1390 801 1380 804" fill="none" stroke="#333" stroke-width="3"/>
<circle cx="1410" cy="795" r="2" fill="#333"/>
<text x="1431" y="803" style="font-size:19px;font-weight:bold;fill:#333">拼</text>
<path d="M1492 803C1496 800 1498 795 1499 788M1505 786L1500 798" stroke="#333" stroke-width="3" fill="none"/>
</svg>
</body></html>
